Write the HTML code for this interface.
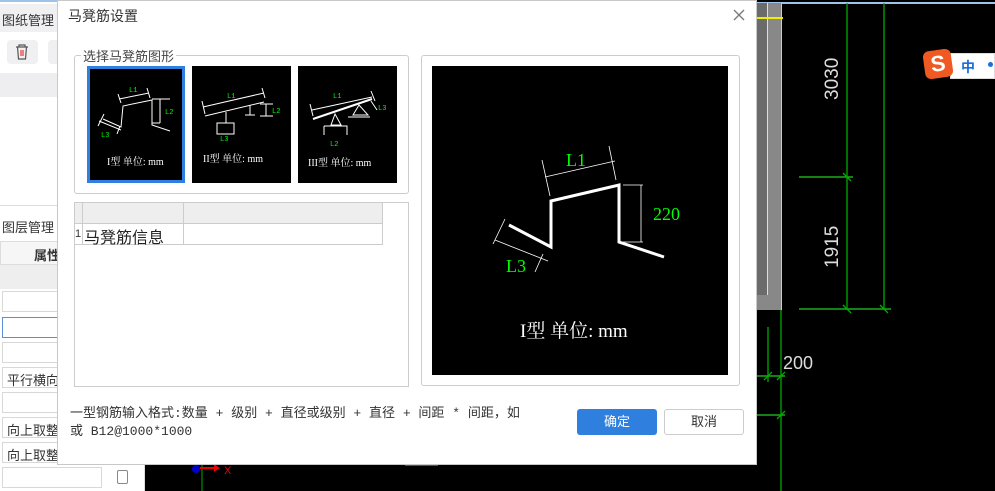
<!DOCTYPE html>
<html><head><meta charset="utf-8"><style>
*{margin:0;padding:0;box-sizing:border-box}
body{width:995px;height:491px;overflow:hidden;position:relative;background:#000;font-family:"Liberation Sans","Noto Sans CJK SC",sans-serif;font-size:13px;color:#333}
.a{position:absolute}
.inp{position:absolute;left:2px;width:140px;height:21px;border:1px solid #d8d8d8;background:#fff;font-size:13px;padding:2px 4px;color:#333}
</style></head><body>
<div class="a" style="left:0;top:0;width:145px;height:491px;background:#fff;border-right:1px solid #ddd"></div>
<div class="a" style="left:0;top:0;width:145px;height:2px;background:#9fc3ea"></div>
<div class="a" style="left:0;top:4px;width:145px;height:28px;background:#f0f0f2;padding:6px 2px;font-size:13px">图纸管理</div>
<div class="a" style="left:7px;top:40px;width:31px;height:24px;background:#f0f0f2;border-radius:4px"></div>
<svg class="a" style="left:14px;top:43px" width="16" height="18"><path d="M2 4h12M5 4V2h6v2M3.5 4l1 12h7l1-12" stroke="#555" fill="none" stroke-width="1.2"/><path d="M7 7v6M9 7v6" stroke="#e33" stroke-width="1.2"/></svg>
<div class="a" style="left:48px;top:40px;width:20px;height:24px;background:#f0f0f2;border-radius:4px"></div>
<div class="a" style="left:0;top:73px;width:145px;height:24px;background:#eeeef0"></div>
<div class="a" style="left:0;top:205px;width:145px;height:1px;background:#ddd"></div>
<div class="a" style="left:2px;top:217px;font-size:13px">图层管理</div>
<div class="a" style="left:0;top:241px;width:145px;height:24px;border:1px solid #ddd;background:#f6f6f6;font-weight:bold;padding:3px 0 0 33px">属性</div>
<div class="a" style="left:0;top:265px;width:145px;height:24px;background:#eee"></div>
<div class="inp" style="top:291px"></div>
<div class="inp" style="top:317px;border-color:#5b8ed8"></div>
<div class="inp" style="top:342px"></div>
<div class="inp" style="top:367px">平行横向</div>
<div class="inp" style="top:392px"></div>
<div class="inp" style="top:417px">向上取整</div>
<div class="inp" style="top:442px">向上取整</div>
<div class="a" style="left:2px;top:467px;width:100px;height:21px;border:1px solid #d8d8d8"></div>
<div class="a" style="left:117px;top:470px;width:11px;height:14px;border:1px solid #888;border-radius:2px"></div>
<div class="a" style="left:757px;top:2px;width:238px;height:2px;background:#9fc3ea"></div>
<div class="a" style="left:757px;top:3px;width:25px;height:307px;background:#888;border-right:1px solid #ccc"></div>
<div class="a" style="left:757px;top:3px;width:11px;height:292px;background:#6b6b6b;border-right:1px solid #ddd"></div>
<div class="a" style="left:757px;top:17px;width:26px;height:2px;background:#ee0"></div>
<svg class="a" style="left:0;top:0" width="995" height="491">
<g stroke="#0a0" stroke-width="1.3">
<line x1="847" y1="3" x2="847" y2="310"/><line x1="884" y1="3" x2="884" y2="310"/>
<line x1="799" y1="177" x2="853" y2="177" stroke="#2c2"/><line x1="799" y1="309" x2="891" y2="309" stroke="#2c2"/>
<line x1="781" y1="310" x2="781" y2="491"/><line x1="768" y1="327" x2="768" y2="382"/>
<line x1="757" y1="376" x2="785" y2="376" stroke="#2c2"/><line x1="757" y1="415" x2="785" y2="415" stroke="#2c2"/>
<line x1="843" y1="173" x2="851" y2="181"/><line x1="843" y1="305" x2="851" y2="313"/><line x1="880" y1="305" x2="888" y2="313"/>
<line x1="764" y1="380" x2="772" y2="372"/><line x1="777" y1="380" x2="785" y2="372"/><line x1="777" y1="419" x2="785" y2="411"/>
</g>
<g fill="#ddd" font-family="Liberation Sans Narrow,Liberation Sans,sans-serif" font-size="19">
<text transform="translate(838,100) rotate(-90)">3030</text>
<text transform="translate(838,268) rotate(-90)">1915</text>
<text x="783" y="369" font-size="18">200</text>
</g>
<line x1="202" y1="464" x2="202" y2="491" stroke="#0a0"/>
<circle cx="196" cy="469" r="4" fill="#0000cc"/>
<path d="M200 467h14v-3l6 4-6 4v-3h-14z" fill="#e00"/>
<text x="224" y="474" fill="#e00" font-size="11">X</text>
<rect x="405" y="464" width="33" height="2" fill="#c0c"/>
</svg>
<div class="a" style="left:950px;top:53px;width:45px;height:26px;background:#fff;border:1px solid #ddd"></div>
<div class="a" style="left:924px;top:50px;width:28px;height:28px;background:#f05a22;border-radius:6px;transform:rotate(-8deg);color:#fff;font-weight:bold;font-size:22px;text-align:center;line-height:27px">S</div>
<div class="a" style="left:961px;top:57px;color:#1a6fd8;font-weight:bold;font-size:14px">中</div>
<div class="a" style="left:988px;top:62px;width:5px;height:5px;border-radius:50%;background:#1a6fd8"></div>
<div class="a" style="left:57px;top:0;width:700px;height:465px;background:#fff;border:1px solid #c8c8c8"></div>
<div class="a" style="left:68px;top:6px;font-size:14px;color:#333">马凳筋设置</div>
<svg class="a" style="left:733px;top:9px" width="12" height="12"><path d="M1 1l10 10M11 1L1 11" stroke="#777" stroke-width="1.3"/></svg>
<div class="a" style="left:74px;top:55px;width:335px;height:139px;border:1px solid #ccc;border-radius:3px"></div>
<div class="a" style="left:81px;top:46px;background:#fff;padding:0 2px;font-size:13px;color:#444">选择马凳筋图形</div>
<div class="a" style="left:87px;top:66px;width:98px;height:117px;background:#000;border:3px solid #2f7fe0"></div>
<div class="a" style="left:192px;top:66px;width:99px;height:117px;background:#000"></div>
<div class="a" style="left:298px;top:66px;width:99px;height:117px;background:#000"></div>
<svg class="a" style="left:0;top:0" width="760" height="491">
<g stroke="#fff" fill="none" stroke-width="1">
<path d="M103 119l18 8l2-21l29-6v25l18 6"/>
<path d="M152 99h18M160 99v24M152 123h8M119 99l30-6M118 94l3 9M147 88l3 10M104 114l-6 12M99 121l22 9M120 126l-3 8"/>
<path d="M203 107l61-14M205 116l59-14M202 101l3 13M262 88l3 10M226 112v11M217 123h17v11h-17zM250 105v10M245 115h10M260 104h13M266 104v12M260 116h13"/>
<path d="M312 110l60-13M371 91l4 10M310 104l3 12"/>
<path d="M313 119l59-20" stroke-width="2"/>
<path d="M335 114l-4 11h10zM324 126h23v9M324 126v9M359 105l-6 10h15zM348 117h22M371 101l6 9"/>
</g>
<g fill="#0f0" font-size="7" font-family="Liberation Mono,monospace">
<text x="129" y="92">L1</text><text x="165" y="114">L2</text><text x="101" y="137">L3</text>
<text x="227" y="98">L1</text><text x="272" y="113">L2</text><text x="220" y="141">L3</text>
<text x="333" y="98">L1</text><text x="378" y="110">L3</text><text x="330" y="146">L2</text>
</g>
<g fill="#fff" font-size="10" font-family="Liberation Serif,Noto Serif CJK SC,serif">
<text x="107" y="165">I型 单位: mm</text><text x="203" y="162">II型 单位: mm</text><text x="308" y="166">III型 单位: mm</text>
</g>
</svg>
<div class="a" style="left:74px;top:202px;width:335px;height:185px;border:1px solid #ccc"></div>
<div class="a" style="left:74px;top:202px;width:309px;height:22px;background:#eee;border:1px solid #ccc"></div>
<div class="a" style="left:74px;top:223px;width:309px;height:22px;border:1px solid #ccc"></div>
<div class="a" style="left:82px;top:202px;width:1px;height:43px;background:#ccc"></div>
<div class="a" style="left:183px;top:202px;width:1px;height:43px;background:#ccc"></div>
<div class="a" style="left:75px;top:228px;font-size:11px">1</div>
<div class="a" style="left:84px;top:224px;font-size:16px;color:#222">马凳筋信息</div>
<div class="a" style="left:421px;top:55px;width:319px;height:331px;border:1px solid #ccc;border-radius:3px"></div>
<div class="a" style="left:432px;top:66px;width:296px;height:309px;background:#000"></div>
<svg class="a" style="left:0;top:0" width="760" height="491">
<path d="M509 225l42 22v-46l68-16v57l45 15" stroke="#fff" stroke-width="3" fill="none"/>
<g stroke="#fff" stroke-width="0.8" fill="none">
<path d="M545 177l70-16M542 160l8 36M609 146l7 34M623 185h20M623 242h20M641 185v57M505 219l-12 25M495 240l53 21M543 254l-8 18"/>
</g>
<g fill="#0f0" font-family="Liberation Serif,serif" font-size="18">
<text x="566" y="166">L1</text><text x="653" y="220">220</text><text x="506" y="272">L3</text>
</g>
<text x="520" y="337" fill="#fff" font-family="Liberation Serif,Noto Serif CJK SC,serif" font-size="19">I型  单位:  mm</text>
</svg>
<div class="a" style="left:70px;top:405px;font-family:'Liberation Mono','Noto Sans CJK SC',monospace;font-size:13px;line-height:18px;color:#333">一型钢筋输入格式:数量 + 级别 + 直径或级别 + 直径 + 间距 * 间距，如<br>或 B12@1000*1000</div>
<div class="a" style="left:577px;top:409px;width:80px;height:26px;background:#2f80de;border-radius:3px;color:#fff;text-align:center;line-height:26px;font-size:13px">确定</div>
<div class="a" style="left:664px;top:409px;width:80px;height:26px;border:1px solid #ccc;border-radius:3px;color:#333;text-align:center;line-height:24px;font-size:13px">取消</div>
</body></html>
